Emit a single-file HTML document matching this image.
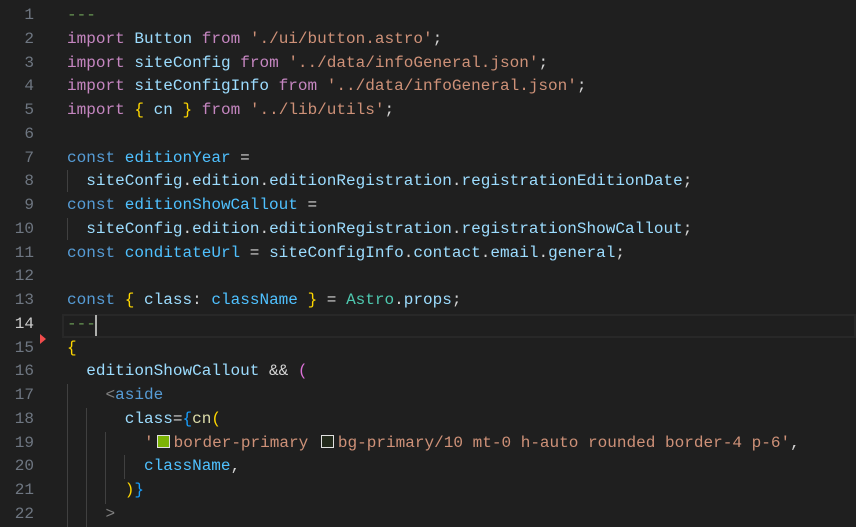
<!DOCTYPE html>
<html><head><meta charset="utf-8"><style>
html,body{margin:0;padding:0;background:#1f1f1f;width:856px;height:527px;overflow:hidden}
#ed{position:relative;width:856px;height:527px;font-family:"Liberation Mono",monospace;font-size:16.05px}
.ln{position:absolute;left:0;width:34px;text-align:right;color:#6e7681;height:23.76px;line-height:23.76px}
.cl{position:absolute;left:67px;white-space:pre;height:23.76px;line-height:23.76px;color:#d4d4d4}
.k{color:#c586c0}.b{color:#569cd6}.v{color:#9cdcfe}.c{color:#4fc1ff}.s{color:#ce9178}.t{color:#4ec9b0}
.y{color:#ffd700}.p{color:#da70d6}.u{color:#179fff}.g{color:#6a9955}.m{color:#808080}
.sw{display:inline-block;width:13px;height:13px;box-sizing:border-box;border:1px solid #e0e0e0;margin:0 4px 0 3px;vertical-align:-1px}
.gd{position:absolute;width:1px;background:#404040}
</style></head><body><div id="ed">
<div style="position:absolute;left:62px;top:314px;width:794px;height:24px;box-sizing:border-box;border:2px solid #282828"></div>
<div style="position:absolute;left:95px;top:315px;width:2px;height:21px;background:#aeafad"></div>
<div style="position:absolute;left:40px;top:334px;width:0;height:0;border-top:5px solid transparent;border-bottom:5px solid transparent;border-left:6px solid #f14c4c"></div>

<div class="gd" style="left:67px;top:170px;height:22px"></div>
<div class="gd" style="left:67px;top:218px;height:22px"></div>
<div class="gd" style="left:67px;top:384px;height:143px"></div>
<div class="gd" style="left:86px;top:408px;height:119px"></div>
<div class="gd" style="left:105px;top:432px;height:72px"></div>
<div class="gd" style="left:124px;top:455px;height:24px"></div>

<div class="ln" style="top:4px">1</div><div class="cl" style="top:4px"><span class="g">---</span></div>
<div class="ln" style="top:27.76px">2</div><div class="cl" style="top:27.76px"><span class="k">import</span> <span class="v">Button</span> <span class="k">from</span> <span class="s">'./ui/button.astro'</span>;</div>
<div class="ln" style="top:51.52px">3</div><div class="cl" style="top:51.52px"><span class="k">import</span> <span class="v">siteConfig</span> <span class="k">from</span> <span class="s">'../data/infoGeneral.json'</span>;</div>
<div class="ln" style="top:75.28px">4</div><div class="cl" style="top:75.28px"><span class="k">import</span> <span class="v">siteConfigInfo</span> <span class="k">from</span> <span class="s">'../data/infoGeneral.json'</span>;</div>
<div class="ln" style="top:99.04px">5</div><div class="cl" style="top:99.04px"><span class="k">import</span> <span class="y">{</span> <span class="v">cn</span> <span class="y">}</span> <span class="k">from</span> <span class="s">'../lib/utils'</span>;</div>
<div class="ln" style="top:122.8px">6</div>
<div class="ln" style="top:146.56px">7</div><div class="cl" style="top:146.56px"><span class="b">const</span> <span class="c">editionYear</span> =</div>
<div class="ln" style="top:170.32px">8</div><div class="cl" style="top:170.32px">  <span class="v">siteConfig</span>.<span class="v">edition</span>.<span class="v">editionRegistration</span>.<span class="v">registrationEditionDate</span>;</div>
<div class="ln" style="top:194.08px">9</div><div class="cl" style="top:194.08px"><span class="b">const</span> <span class="c">editionShowCallout</span> =</div>
<div class="ln" style="top:217.84px">10</div><div class="cl" style="top:217.84px">  <span class="v">siteConfig</span>.<span class="v">edition</span>.<span class="v">editionRegistration</span>.<span class="v">registrationShowCallout</span>;</div>
<div class="ln" style="top:241.6px">11</div><div class="cl" style="top:241.6px"><span class="b">const</span> <span class="c">conditateUrl</span> = <span class="v">siteConfigInfo</span>.<span class="v">contact</span>.<span class="v">email</span>.<span class="v">general</span>;</div>
<div class="ln" style="top:265.36px">12</div>
<div class="ln" style="top:289.12px">13</div><div class="cl" style="top:289.12px"><span class="b">const</span> <span class="y">{</span> <span class="v">class</span>: <span class="c">className</span> <span class="y">}</span> = <span class="t">Astro</span>.<span class="v">props</span>;</div>
<div class="ln" style="top:312.88px;color:#cccccc">14</div><div class="cl" style="top:312.88px"><span class="g">---</span></div>
<div class="ln" style="top:336.64px">15</div><div class="cl" style="top:336.64px"><span class="y">{</span></div>
<div class="ln" style="top:360.4px">16</div><div class="cl" style="top:360.4px">  <span class="v">editionShowCallout</span> &amp;&amp; <span class="p">(</span></div>
<div class="ln" style="top:384.16px">17</div><div class="cl" style="top:384.16px">    <span class="m">&lt;</span><span class="b">aside</span></div>
<div class="ln" style="top:407.92px">18</div><div class="cl" style="top:407.92px">      <span class="v">class</span>=<span class="u">{</span><span class="v" style="color:#dcdcaa">cn</span><span class="y">(</span></div>
<div class="ln" style="top:431.68px">19</div><div class="cl" style="top:431.68px">        <span class="s">'<span class="sw" style="background:#7cb305"></span>border-primary <span class="sw" style="background:#22291b"></span>bg-primary/10 mt-0 h-auto rounded border-4 p-6'</span>,</div>
<div class="ln" style="top:455.44px">20</div><div class="cl" style="top:455.44px">        <span class="c">className</span>,</div>
<div class="ln" style="top:479.2px">21</div><div class="cl" style="top:479.2px">      <span class="y">)</span><span class="u">}</span></div>
<div class="ln" style="top:502.96px">22</div><div class="cl" style="top:502.96px">    <span class="m">&gt;</span></div>
</div></body></html>
